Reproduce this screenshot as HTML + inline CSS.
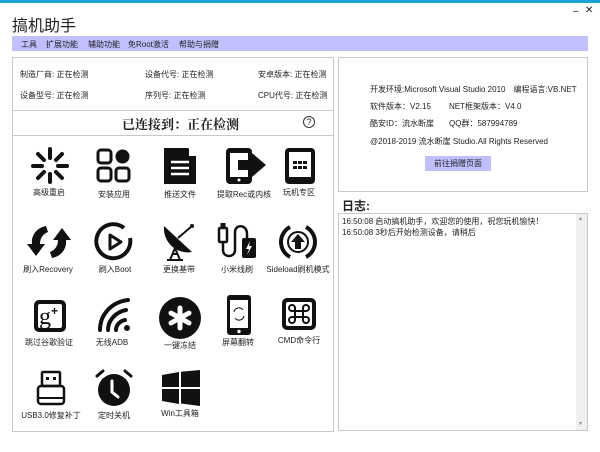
<!DOCTYPE html>
<html><head><meta charset="utf-8"><style>
*{margin:0;padding:0;box-sizing:border-box}
body{width:600px;height:452px;background:#fff;position:relative;overflow:hidden;font-family:"Liberation Sans","Noto Sans CJK SC",sans-serif;color:#222}
.a{position:absolute}
.s{font-size:8px;white-space:nowrap}
.lbl{position:absolute;font-size:8px;white-space:nowrap;transform:translateX(-50%)}
svg{position:absolute}
</style></head><body>
<div class="a" style="left:0;top:0;width:600px;height:3px;background:#1aa3d0"></div>
<div class="a" style="left:12px;top:12px;font-size:16px;color:#222">搞机助手</div>
<div class="a s" style="left:573px;top:6px;font-size:10px">–</div>
<div class="a s" style="left:585px;top:5px;font-size:10px">✕</div>
<div class="a" style="left:12px;top:36px;width:576px;height:15px;background:#c0c0ff"></div>
<div class="a s" style="left:21px;top:39px">工具</div>
<div class="a s" style="left:46px;top:39px">扩展功能</div>
<div class="a s" style="left:88px;top:39px">辅助功能</div>
<div class="a s" style="left:128px;top:39px">免Root激活</div>
<div class="a s" style="left:179px;top:39px">帮助与捐赠</div>

<div class="a" style="left:12px;top:57px;width:322px;height:375px;border:1px solid #c8c8c8"></div>
<div class="a" style="left:12px;top:110px;width:322px;height:1px;background:#c8c8c8"></div>
<div class="a" style="left:12px;top:135px;width:322px;height:1px;background:#c8c8c8"></div>
<div class="a s" style="left:20px;top:69px">制造厂商: 正在检测</div>
<div class="a s" style="left:145px;top:69px">设备代号: 正在检测</div>
<div class="a s" style="left:258px;top:69px">安卓版本: 正在检测</div>
<div class="a s" style="left:20px;top:90px">设备型号: 正在检测</div>
<div class="a s" style="left:145px;top:90px">序列号: 正在检测</div>
<div class="a s" style="left:258px;top:90px">CPU代号: 正在检测</div>
<div class="a" style="left:122px;top:114px;font-size:13px;font-weight:bold;font-family:'Noto Serif CJK SC',serif">已连接到：正在检测</div>
<div class="a" style="left:303px;top:116px;width:12px;height:12px;border:1px solid #333;border-radius:50%;font-size:9px;text-align:center;line-height:10px">?</div>

<!-- row1 -->
<svg style="left:30px;top:146px" width="40" height="40" viewBox="0 0 40 40"><g stroke="#111" stroke-width="4" stroke-linecap="round"><line x1="20" y1="3" x2="20" y2="12"/><line x1="20" y1="28" x2="20" y2="36"/><line x1="3" y1="20" x2="12" y2="20"/><line x1="28" y1="20" x2="37" y2="20"/><line x1="8" y1="8" x2="14" y2="14"/><line x1="26" y1="26" x2="32" y2="32"/><line x1="8" y1="32" x2="14" y2="26"/><line x1="26" y1="14" x2="32" y2="8"/></g></svg>
<div class="lbl" style="left:49px;top:187px">高级重启</div>
<svg style="left:96px;top:148px" width="36" height="36" viewBox="0 0 36 36"><g fill="none" stroke="#111" stroke-width="3"><rect x="2" y="2" width="13" height="13" rx="3"/><rect x="2" y="20" width="13" height="13" rx="3"/><rect x="20" y="20" width="13" height="13" rx="3"/></g><circle cx="26.5" cy="8.5" r="7" fill="#111"/></svg>
<div class="lbl" style="left:114px;top:189px">安装应用</div>
<svg style="left:162px;top:146px" width="36" height="40" viewBox="0 0 36 40"><path d="M2 2h24l8 8v28H2z" fill="#111"/><path d="M27 2v8h7" fill="#fff"/><g stroke="#fff" stroke-width="2.5"><line x1="9" y1="16" x2="27" y2="16"/><line x1="9" y1="22" x2="27" y2="22"/><line x1="9" y1="28" x2="27" y2="28"/></g></svg>
<div class="lbl" style="left:180px;top:189px">推送文件</div>
<svg style="left:224px;top:146px" width="44" height="40" viewBox="0 0 44 40"><rect x="2" y="2" width="26" height="36" rx="4" fill="#111"/><rect x="6" y="7" width="18" height="24" fill="#fff"/><circle cx="15" cy="34" r="1.5" fill="#fff"/><path d="M14 14h14v-7l14 12-14 12v-7H14z" fill="#111"/></svg>
<div class="lbl" style="left:244px;top:189px">提取Rec或内核</div>
<svg style="left:283px;top:146px" width="34" height="40" viewBox="0 0 34 40"><rect x="2" y="2" width="30" height="36" rx="4" fill="#111"/><rect x="6" y="6" width="22" height="25" fill="#fff"/><g fill="#111"><rect x="10" y="15" width="4" height="3"/><rect x="15" y="15" width="4" height="3"/><rect x="20" y="15" width="4" height="3"/><rect x="10" y="20" width="4" height="3"/><rect x="15" y="20" width="4" height="3"/><rect x="20" y="20" width="4" height="3"/></g></svg>
<div class="lbl" style="left:299px;top:187px">玩机专区</div>

<!-- row2 -->
<svg style="left:26px;top:222px" width="46" height="40" viewBox="0 0 46 40"><path d="M20 4C10 6 5 14 6 22H1l9 12 9-12h-5c0-6 3-10 8-12z" fill="#111"/><path d="M26 36c10-2 15-10 14-18h5L36 6l-9 12h5c0 6-3 10-8 12z" fill="#111"/></svg>
<div class="lbl" style="left:48px;top:264px">刷入Recovery</div>
<svg style="left:94px;top:222px" width="40" height="40" viewBox="0 0 40 40"><path d="M30 6A17 17 0 1 0 36 16" fill="none" stroke="#111" stroke-width="4"/><path d="M16 13l11 7-11 7z" fill="none" stroke="#111" stroke-width="3" stroke-linejoin="round"/></svg>
<div class="lbl" style="left:115px;top:264px">刷入Boot</div>
<svg style="left:160px;top:220px" width="40" height="42" viewBox="0 0 40 42"><path d="M4 6a24 24 0 0 0 28 26z" fill="#111"/><line x1="18" y1="18" x2="32" y2="6" stroke="#111" stroke-width="2"/><circle cx="32" cy="6" r="2" fill="#111"/><path d="M10 40l5-12 5 12zM12 34h6" fill="none" stroke="#111" stroke-width="2"/><line x1="7" y1="40" x2="23" y2="40" stroke="#111" stroke-width="2"/></svg>
<div class="lbl" style="left:179px;top:264px">更换基带</div>
<svg style="left:216px;top:220px" width="44" height="42" viewBox="0 0 44 42"><rect x="3" y="8" width="8" height="14" rx="1" fill="none" stroke="#111" stroke-width="2.5"/><rect x="4.5" y="3" width="5" height="5" fill="#111"/><path d="M7 22v8c0 8 12 8 12 0V12c0-8 12-8 12 2v4" fill="none" stroke="#111" stroke-width="2.5"/><rect x="26" y="18" width="14" height="20" rx="2" fill="#111"/><path d="M34 21l-4 8h3l-2 6 5-9h-3z" fill="#fff"/></svg>
<div class="lbl" style="left:237px;top:264px">小米线刷</div>
<svg style="left:278px;top:222px" width="40" height="40" viewBox="0 0 40 40"><path d="M12 5A17 17 0 0 0 12 35M28 5A17 17 0 0 1 28 35" fill="none" stroke="#111" stroke-width="4"/><circle cx="20" cy="20" r="10" fill="none" stroke="#111" stroke-width="2"/><path d="M20 12l7 8h-4v7h-6v-7h-4z" fill="#111"/></svg>
<div class="lbl" style="left:298px;top:264px">Sideload刷机模式</div>

<!-- row3 -->
<svg style="left:32px;top:298px" width="36" height="36" viewBox="0 0 36 36"><rect x="2" y="2" width="32" height="32" rx="5" fill="#111"/><rect x="6" y="6" width="24" height="24" rx="2" fill="#fff"/><text x="7" y="26" font-family="Liberation Serif,serif" font-size="24" fill="#111">g</text><text x="19" y="17" font-family="Liberation Sans,sans-serif" font-size="12" font-weight="bold" fill="#111">+</text></svg>
<div class="lbl" style="left:49px;top:337px">跳过谷歌验证</div>
<svg style="left:96px;top:296px" width="36" height="38" viewBox="0 0 36 38"><g fill="none" stroke="#111" stroke-width="4" stroke-linecap="round"><path d="M4 34C4 18 16 6 32 4"/><path d="M12 34c0-10 8-18 18-20"/><path d="M20 34c0-5 4-9 9-10"/></g><circle cx="31" cy="32" r="3" fill="#111"/></svg>
<div class="lbl" style="left:112px;top:337px">无线ADB</div>
<svg style="left:158px;top:296px" width="44" height="44" viewBox="0 0 44 44"><circle cx="22" cy="22" r="21" fill="#111"/><g stroke="#fff" stroke-width="5" stroke-linecap="round"><line x1="22" y1="12" x2="22" y2="32"/><line x1="13" y1="17" x2="31" y2="27"/><line x1="13" y1="27" x2="31" y2="17"/></g></svg>
<div class="lbl" style="left:180px;top:340px">一键冻结</div>
<svg style="left:226px;top:294px" width="26" height="42" viewBox="0 0 26 42"><rect x="1" y="1" width="24" height="40" rx="3" fill="#111"/><rect x="4" y="6" width="18" height="28" fill="#fff"/><circle cx="13" cy="37.5" r="1.7" fill="#fff"/><path d="M8 18a5 5 0 0 1 9-2M18 22a5 5 0 0 1-9 2" fill="none" stroke="#111" stroke-width="1"/></svg>
<div class="lbl" style="left:238px;top:337px">屏幕翻转</div>
<svg style="left:280px;top:296px" width="38" height="36" viewBox="0 0 38 36"><rect x="2" y="2" width="34" height="32" rx="5" fill="#111"/><rect x="6" y="6" width="26" height="24" rx="2" fill="#fff"/><path d="M15 12v12M23 12v12M12 15h14M12 21h14M15 12a3 3 0 1 0-3 3M23 12a3 3 0 1 1 3 3M15 24a3 3 0 1 1-3-3M23 24a3 3 0 1 0 3-3" fill="none" stroke="#111" stroke-width="2"/></svg>
<div class="lbl" style="left:299px;top:335px">CMD命令行</div>

<!-- row4 -->
<svg style="left:36px;top:370px" width="30" height="36" viewBox="0 0 30 36"><rect x="6" y="2" width="18" height="14" rx="1" fill="none" stroke="#111" stroke-width="2.5"/><rect x="10" y="7" width="3" height="3" fill="#111"/><rect x="17" y="7" width="3" height="3" fill="#111"/><rect x="2" y="16" width="26" height="18" rx="3" fill="none" stroke="#111" stroke-width="2.5"/><line x1="2" y1="28" x2="28" y2="28" stroke="#111" stroke-width="2"/></svg>
<div class="lbl" style="left:51px;top:410px">USB3.0修复补丁</div>
<svg style="left:94px;top:368px" width="40" height="40" viewBox="0 0 40 40"><path d="M3 8l6-5M37 8l-6-5" stroke="#111" stroke-width="3" stroke-linecap="round"/><circle cx="20" cy="22" r="16" fill="#111"/><path d="M18 13v11l6 5" fill="none" stroke="#fff" stroke-width="3" stroke-linecap="round"/></svg>
<div class="lbl" style="left:114px;top:410px">定时关机</div>
<svg style="left:160px;top:370px" width="42" height="36" viewBox="0 0 42 36"><path d="M2 5l17-3v15H2zM21 1.7l19-1.7v17H21zM2 19h17v15L2 31zM21 19h19v17l-19-2.5z" fill="#111"/></svg>
<div class="lbl" style="left:180px;top:408px">Win工具箱</div>

<!-- right -->
<div class="a" style="left:338px;top:57px;width:250px;height:135px;border:1px solid #c8c8c8"></div>
<div class="a s" style="left:370px;top:84px">开发环境:Microsoft Visual Studio 2010　编程语言:VB.NET</div>
<div class="a s" style="left:370px;top:101px">软件版本：V2.15</div>
<div class="a s" style="left:449px;top:101px">NET框架版本：V4.0</div>
<div class="a s" style="left:370px;top:118px">酷安ID：流水断崖</div>
<div class="a s" style="left:449px;top:118px">QQ群：587994789</div>
<div class="a s" style="left:370px;top:136px">@2018-2019 流水断崖 Studio.All Rights Reserved</div>
<div class="a s" style="left:425px;top:156px;width:66px;height:15px;background:#c0c0ff;text-align:center;line-height:15px">前往捐赠页面</div>
<div class="a" style="left:342px;top:197px;font-size:12px;font-weight:bold">日志:</div>
<div class="a" style="left:338px;top:213px;width:250px;height:218px;border:1px solid #c8c8c8"></div>
<div class="a" style="left:576px;top:214px;width:11px;height:216px;background:#f0f0f0"></div>
<div class="a s" style="left:342px;top:216px">16:50:08 启动搞机助手，欢迎您的使用，祝您玩机愉快！</div>
<div class="a s" style="left:342px;top:227px">16:50:08 3秒后开始检测设备，请稍后</div>
<div class="a s" style="left:579px;top:215px;font-size:6px;color:#888">▴</div>
<div class="a s" style="left:579px;top:420px;font-size:6px;color:#888">▾</div>
</body></html>
